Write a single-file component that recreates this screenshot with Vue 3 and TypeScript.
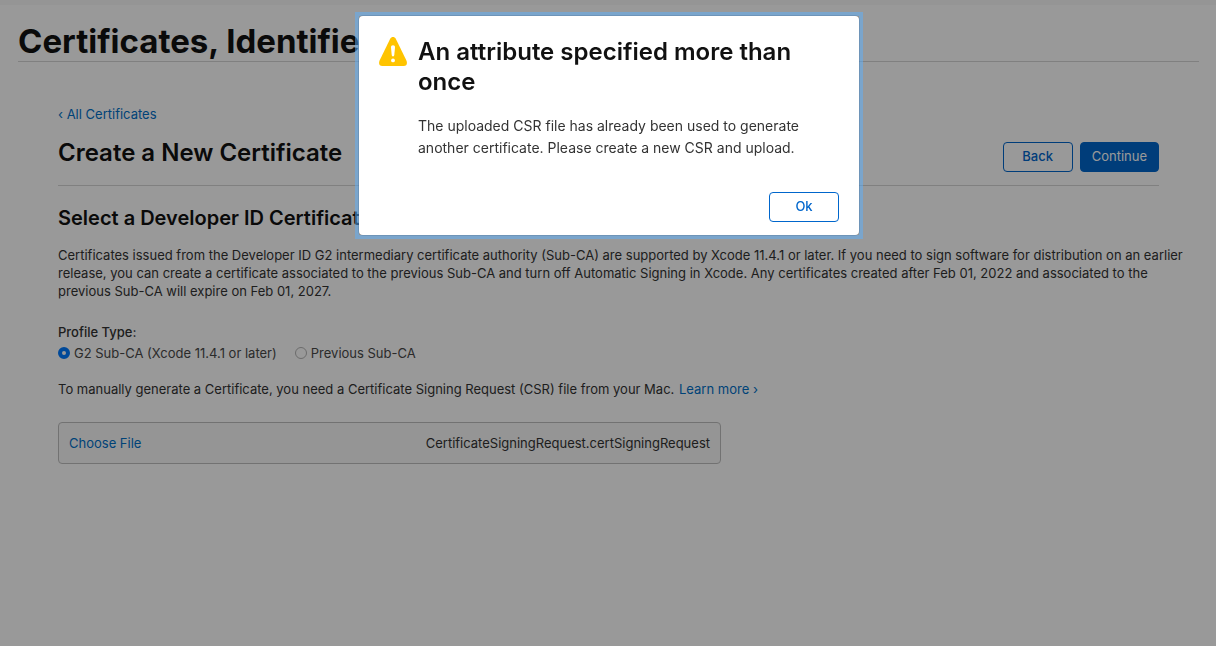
<script setup lang="ts">
import { ref } from 'vue'

const profileTypes = [
  { value: 'g2', label: 'G2 Sub-CA (Xcode 11.4.1 or later)' },
  { value: 'previous', label: 'Previous Sub-CA' },
]
const profileType = ref('g2')
const fileName = ref('CertificateSigningRequest.certSigningRequest')
const alertOpen = ref(true)
</script>

<template>
  <div class="page">
    <div class="topbar"></div>
    <header class="masthead">
      <h1>Certificates, Identifiers &amp; Profiles</h1>
    </header>
    <main class="content">
      <a class="back-link" href="#">‹ All Certificates</a>
      <div class="title-row">
        <h2>Create a New Certificate</h2>
        <div class="actions">
          <button type="button" class="btn">Back</button>
          <button type="button" class="btn primary">Continue</button>
        </div>
      </div>
      <h3>Select a Developer ID Certificate Intermediary</h3>
      <p class="intro">
        Certificates issued from the Developer ID G2 intermediary certificate authority (Sub-CA) are
        supported by Xcode 11.4.1 or later. If you need to sign software for distribution on an
        earlier release, you can create a certificate associated to the previous Sub-CA and turn off
        Automatic Signing in Xcode. Any certificates created after Feb 01, 2022 and associated to the
        previous Sub-CA will expire on Feb 01, 2027.
      </p>
      <fieldset>
        <legend>Profile Type:</legend>
        <div class="options">
          <label v-for="t in profileTypes" :key="t.value">
            <input v-model="profileType" type="radio" name="profile-type" :value="t.value" />
            <span>{{ t.label }}</span>
          </label>
        </div>
      </fieldset>
      <p class="hint">
        To manually generate a Certificate, you need a Certificate Signing Request (CSR) file from
        your Mac. <a href="#">Learn more ›</a>
      </p>
      <div class="file-box">
        <button type="button" class="choose">Choose File</button>
        <span>{{ fileName }}</span>
      </div>
    </main>

    <div v-if="alertOpen" class="overlay">
      <div class="focus-frame">
        <dialog open aria-labelledby="alert-title">
          <svg class="warn" viewBox="0 0 28 29" aria-hidden="true">
            <path
              d="M14 0C15.2 0 16.1.6 16.8 1.800L27.400 23.600C28.700 26.500 27.600 29 24.700 29H3.300C.4 29-.7 26.500.6 23.600L11.200 1.800C11.900.6 12.800 0 14 0Z"
              fill="#ffc400"
            />
            <path
              d="M14 8.200c-1.300 0-2.100.9-2 2.200l.7 7.400c.1 1 .6 1.600 1.300 1.600s1.200-.6 1.300-1.600l.7-7.400c.1-1.300-.7-2.200-2-2.200Z"
              fill="#fff"
            />
            <circle cx="14" cy="23.400" r="1.900" fill="#fff" />
          </svg>
          <div class="alert-body">
            <h2 id="alert-title">An attribute specified more than once</h2>
            <p>
              The uploaded CSR file has already been used to generate another certificate. Please
              create a new CSR and upload.
            </p>
          </div>
          <button type="button" class="btn ok" @click="alertOpen = false">Ok</button>
        </dialog>
      </div>
    </div>
  </div>
</template>

<style>
body {
  margin: 0;
  background: #fff;
}
</style>

<style scoped>
* {
  box-sizing: border-box;
}
.page {
  min-height: 100vh;
  font-family: Inter, "Liberation Sans", sans-serif;
  font-size: 13px;
  line-height: 18px;
  color: #333;
}
button {
  font: inherit;
}
h1,
h2,
h3,
p {
  margin: 0;
  color: #111;
}
a {
  color: #0070c9;
  text-decoration: none;
}
.topbar {
  height: 5px;
  background: #f8f8f8;
}
.masthead {
  margin: 0 17px 0 18px;
  padding-top: 16px;
  border-bottom: 1px solid #d6d6d6;
}
h1 {
  font-size: 33px;
  line-height: 40px;
  font-weight: 700;
}
.content {
  padding: 43px 57px 24px 58px;
}
.back-link {
  display: block;
}
.title-row {
  display: flex;
  justify-content: space-between;
  align-items: flex-start;
  margin-top: 15px;
  padding-bottom: 13px;
  border-bottom: 1px solid #d6d6d6;
}
h2 {
  font-size: 24px;
  line-height: 30px;
  font-weight: 600;
}
.actions {
  display: flex;
  gap: 7px;
  padding-top: 4px;
}
.btn {
  min-width: 70px;
  height: 30px;
  padding: 0 11px 2px;
  border: 1px solid #06c;
  border-radius: 4px;
  background: #fff;
  color: #06c;
  font-weight: 500;
}
.btn.primary {
  background: #06c;
  color: #fff;
  font-weight: 400;
}
h3 {
  margin-top: 20px;
  font-size: 20px;
  line-height: 24px;
  font-weight: 600;
}
.intro {
  margin: 16px -28px 0 0;
  color: #333;
}
fieldset {
  margin: 23px 0 0;
  padding: 0;
  border: 0;
}
legend {
  padding: 0;
  font-weight: 500;
}
.options {
  display: flex;
  gap: 18px;
  margin-top: 3px;
  color: #494949;
}
.options label {
  display: flex;
  align-items: center;
  gap: 4px;
}
input[type='radio'] {
  appearance: none;
  width: 12px;
  height: 12px;
  margin: 0;
  border: 1px solid #b4b4b4;
  border-radius: 50%;
  background: #fff;
}
input[type='radio']:checked {
  border: 4px solid #007aff;
}
.hint {
  margin-top: 18px;
  color: #333;
}
.hint a {
  margin-left: 1px;
}
.file-box {
  display: flex;
  align-items: center;
  justify-content: space-between;
  width: 60%;
  min-width: 663px;
  height: 42px;
  margin-top: 24px;
  padding: 0 10px;
  border: 1px solid #bfbfbf;
  border-radius: 4px;
  background: #f8f8f8;
}
.choose {
  padding: 0;
  border: 0;
  background: none;
  color: #0070c9;
}
.overlay {
  position: fixed;
  inset: 0;
  display: flex;
  justify-content: center;
  align-items: flex-start;
  padding: 12px 0 0 2px;
  background: rgba(0, 0, 0, 0.4);
}
.focus-frame {
  width: 508px;
  border: 4px solid rgba(91, 177, 255, 0.5);
}
dialog {
  position: static;
  display: grid;
  grid-template-columns: 28px 1fr;
  column-gap: 11px;
  width: 100%;
  margin: 0;
  padding: 21px 20px 13px;
  border: 0;
  border-radius: 4px;
  background: #fff;
  box-shadow: 0 0 0 1px rgba(0, 0, 0, 0.1);
  color: #333;
}
.warn {
  width: 28px;
  height: 29px;
}
.alert-body p {
  margin-top: 18px;
  font-size: 14px;
  line-height: 22px;
  color: #333;
}
.ok {
  grid-column: 2;
  justify-self: end;
  margin-top: 33px;
}
</style>
